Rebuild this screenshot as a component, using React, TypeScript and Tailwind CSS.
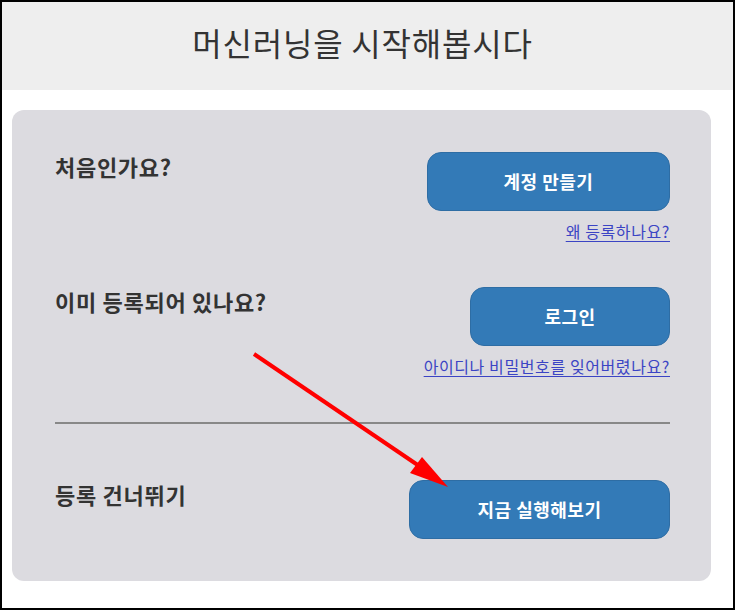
const font = { fontFamily: '"Noto Sans CJK KR", "Noto Sans", sans-serif' }

function Heading({ children }: { children: string }) {
  return <div className="text-[22px] font-bold leading-[28px] tracking-[0.7px] text-[#333]">{children}</div>
}

function BlueButton({ label, width }: { label: string; width: string }) {
  return (
    <button
      className={`flex h-[59px] items-center justify-center rounded-[14px] border border-[#2e6da4] bg-[#337ab7] text-[18px] font-bold tracking-[0.5px] text-white ${width}`}
    >
      {label}
    </button>
  )
}

function HelpLink({ children }: { children: string }) {
  return (
    <a
      href="#"
      className="mt-[10px] text-[16px] leading-[21px] tracking-[0.6px] text-[#3b44c4] underline decoration-1 underline-offset-[3px]"
    >
      {children}
    </a>
  )
}

export default function App() {
  return (
    <div className="relative h-[610px] w-[735px] border-2 border-black bg-white" style={font}>
      <div className="flex h-[88px] items-center justify-center bg-[#eeeeee] pb-[8px] pr-[10px]">
        <h1 className="text-[32px] font-normal tracking-[0.8px] text-[#333]">머신러닝을 시작해봅시다</h1>
      </div>

      <div className="ml-[10px] mt-[20px] h-[471px] w-[699px] rounded-[12px] bg-[#dcdbe0] pl-[43px] pr-[41px] pt-[42px]">
        <div className="flex justify-between">
          <Heading>처음인가요?</Heading>
          <div className="flex flex-col items-end">
            <BlueButton label="계정 만들기" width="w-[243px]" />
            <HelpLink>왜 등록하나요?</HelpLink>
          </div>
        </div>

        <div className="mt-[45px] flex justify-between">
          <Heading>이미 등록되어 있나요?</Heading>
          <div className="flex flex-col items-end">
            <BlueButton label="로그인" width="w-[200px]" />
            <HelpLink>아이디나 비밀번호를 잊어버렸나요?</HelpLink>
          </div>
        </div>

        <div className="mt-[45px] h-[2px] bg-[#888888]" />

        <div className="mt-[56px] flex justify-between">
          <Heading>등록 건너뛰기</Heading>
          <BlueButton label="지금 실행해보기" width="w-[261px]" />
        </div>
      </div>

      <svg className="pointer-events-none absolute left-[-2px] top-[-2px]" width="735" height="610">
        <line x1="254" y1="354" x2="428" y2="472" stroke="#ff0000" strokeWidth="4" />
        <polygon points="448,487 410,473 422,457" fill="#ff0000" />
      </svg>
    </div>
  )
}
